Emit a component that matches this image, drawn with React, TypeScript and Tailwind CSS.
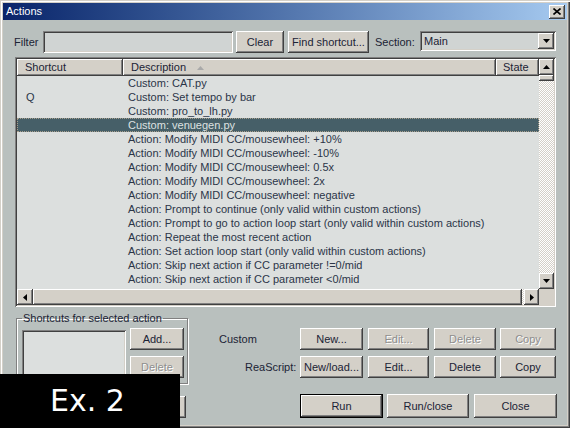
import React from "react";

const raised =
  "shadow-[inset_-1px_-1px_0_#404040,inset_1px_1px_0_#ffffff,inset_-2px_-2px_0_#808080]";
const sunken =
  "shadow-[inset_1px_1px_0_#808080,inset_-1px_-1px_0_#ffffff,inset_2px_2px_0_#404040,inset_-2px_-2px_0_#d4d0c8]";

function Btn({
  label,
  cls,
  disabled,
}: {
  label: string;
  cls: string;
  disabled?: boolean;
}) {
  return (
    <div
      className={`flex items-center justify-center bg-[#d4d0c8] whitespace-nowrap ${raised} ${cls} ${
        disabled
          ? "text-[#8e8e8e] [text-shadow:1px_1px_0_#ffffff]"
          : "text-[#1b2335]"
      }`}
    >
      {label}
    </div>
  );
}

function Tri({ dir, color = "#000000" }: { dir: "up" | "down" | "left" | "right"; color?: string }) {
  if (dir === "up")
    return (
      <svg width="7" height="4" viewBox="0 0 7 4">
        <polygon points="0,4 3.5,0 7,4" fill={color} />
      </svg>
    );
  if (dir === "down")
    return (
      <svg width="7" height="4" viewBox="0 0 7 4">
        <polygon points="0,0 7,0 3.5,4" fill={color} />
      </svg>
    );
  if (dir === "left")
    return (
      <svg width="4" height="7" viewBox="0 0 4 7">
        <polygon points="4,0 4,7 0,3.5" fill={color} />
      </svg>
    );
  return (
    <svg width="4" height="7" viewBox="0 0 4 7">
      <polygon points="0,0 4,3.5 0,7" fill={color} />
    </svg>
  );
}

const rows: [string, string][] = [
  ["", "Custom: CAT.py"],
  ["Q", "Custom: Set tempo by bar"],
  ["", "Custom: pro_to_lh.py"],
  ["", "Custom: venuegen.py"],
  ["", "Action: Modify MIDI CC/mousewheel: +10%"],
  ["", "Action: Modify MIDI CC/mousewheel: -10%"],
  ["", "Action: Modify MIDI CC/mousewheel: 0.5x"],
  ["", "Action: Modify MIDI CC/mousewheel: 2x"],
  ["", "Action: Modify MIDI CC/mousewheel: negative"],
  ["", "Action: Prompt to continue (only valid within custom actions)"],
  ["", "Action: Prompt to go to action loop start (only valid within custom actions)"],
  ["", "Action: Repeat the most recent action"],
  ["", "Action: Set action loop start (only valid within custom actions)"],
  ["", "Action: Skip next action if CC parameter !=0/mid"],
  ["", "Action: Skip next action if CC parameter <0/mid"],
  ["", "Action: Skip next action if CC parameter >0/mid"],
];

export default function App() {
  return (
    <div className="relative w-[570px] h-[428px] overflow-hidden bg-[#d4d0c8] p-[3px] flex flex-col font-['Liberation_Sans',Arial,sans-serif] text-[11px] shadow-[inset_1px_1px_0_#d4d0c8,inset_2px_2px_0_#ffffff,inset_-1px_-1px_0_#404040,inset_-2px_-2px_0_#808080]">
      {/* Title bar */}
      <div className="h-[17px] flex items-center pl-[3px] pr-[2px] bg-gradient-to-r from-[#0a246a] to-[#a6caf0]">
        <span className="flex-1 text-white leading-none">Actions</span>
        <div className={`w-[16px] h-[14px] bg-[#d4d0c8] flex items-center justify-center ${raised}`}>
          <svg width="8" height="7" viewBox="0 0 8 7">
            <path d="M0.5 0.5 L7.5 6.5 M7.5 0.5 L0.5 6.5" stroke="#000000" strokeWidth="1.6" />
          </svg>
        </div>
      </div>

      {/* Body */}
      <div className="flex-1 bg-[#b9c0be] flex flex-col text-[#1b2335]">
        {/* Filter row */}
        <div className="mt-[11px] ml-[11px] flex items-start h-[22px]">
          <div className="w-[29px] h-[22px] overflow-hidden whitespace-nowrap flex items-center">Filter</div>
          <div className={`w-[190px] h-[22px] bg-[#d0d4d3] ${sunken}`} />
          <Btn label="Clear" cls="ml-[3px] w-[48px] h-[22px]" />
          <Btn label="Find shortcut..." cls="ml-[4px] w-[81px] h-[22px]" />
          <div className="ml-[6px] w-[45px] h-[22px] flex items-center">Section:</div>
          <div className={`w-[136px] h-[20px] bg-[#d0d4d3] flex items-center pl-[4px] pr-[2px] ${sunken}`}>
            <span className="flex-1">Main</span>
            <div className={`w-[16px] h-[16px] bg-[#d4d0c8] flex items-center justify-center ${raised}`}>
              <Tri dir="down" />
            </div>
          </div>
        </div>

        {/* List */}
        <div className={`mt-[4px] ml-[12px] w-[541px] h-[250px] p-[2px] bg-[#dcdfde] flex ${sunken}`}>
          <div className="w-[522px] flex flex-col">
            <div className="h-[17px] flex bg-[#d4d0c8] text-[#1b2335]">
              <div className={`w-[106px] flex items-center pl-[8px] ${raised}`}>Shortcut</div>
              <div className={`w-[373px] flex items-center pl-[8px] ${raised}`}>
                <span>Description</span>
                <span className="ml-[11px] flex">
                  <Tri dir="up" color="#a9a9a9" />
                </span>
              </div>
              <div className={`w-[43px] flex items-center pl-[7px] ${raised}`}>State</div>
            </div>
            <div className="flex-1 overflow-hidden text-[#2b3548]">
              {rows.map(([k, d], i) => {
                const sel = i === 3;
                return (
                  <div
                    key={i}
                    className={`h-[14px] flex items-center whitespace-nowrap leading-[14px] ${
                      sel
                        ? "bg-[#465f68] text-[#dde1e1] outline outline-1 outline-dotted outline-[#a89e8c] -outline-offset-1"
                        : ""
                    }`}
                  >
                    <div className="w-[106px] pl-[9px]">{k}</div>
                    <div className="pl-[5px]">{d}</div>
                  </div>
                );
              })}
            </div>
            <div className="h-[16px] flex bg-[#d4d0c8]">
              <div className={`w-[16px] flex items-center justify-center ${raised}`}>
                <Tri dir="left" />
              </div>
              <div className={`flex-1 ${raised}`} />
              <div className="w-[2px] bg-[repeating-conic-gradient(#d4d0c8_0%_25%,#ffffff_0%_50%)] bg-[length:2px_2px]" />
              <div className={`w-[15px] flex items-center justify-center ${raised}`}>
                <Tri dir="right" />
              </div>
            </div>
          </div>
          <div className="w-[15px] flex flex-col">
            <div className={`h-[16px] bg-[#d4d0c8] flex items-center justify-center ${raised}`}>
              <Tri dir="up" />
            </div>
            <div className={`h-[6px] bg-[#d4d0c8] ${raised}`} />
            <div className="flex-1 bg-[repeating-conic-gradient(#d4d0c8_0%_25%,#ffffff_0%_50%)] bg-[length:2px_2px]" />
            <div className={`h-[16px] bg-[#d4d0c8] flex items-center justify-center ${raised}`}>
              <Tri dir="down" />
            </div>
            <div className="h-[16px] bg-[#d4d0c8]" />
          </div>
        </div>

        {/* Bottom area */}
        <div className="mt-[5px] ml-[13px] flex items-start">
          <div className="w-[172px] flex flex-col">
            <fieldset className="h-[72px] border border-[#808080] shadow-[1px_1px_0_#ffffff,inset_1px_1px_0_#ffffff]">
              <legend className="ml-[5px] px-[1px] leading-[13px] text-[#1b2335]">Shortcuts for selected action</legend>
              <div className="flex pl-[5px] pt-[3px]">
                <div className={`mt-[2px] w-[104px] h-[54px] bg-[#dcdfde] ${sunken}`} />
                <div className="ml-[4px] flex flex-col gap-[6px]">
                  <Btn label="Add..." cls="w-[54px] h-[22px]" />
                  <Btn label="Delete" cls="w-[54px] h-[22px]" disabled />
                </div>
              </div>
            </fieldset>
            <Btn label="Import/export..." cls="mt-[12px] ml-[6px] w-[164px] h-[22px]" />
          </div>
          <div className="flex flex-col">
            <div className="mt-[16px] flex items-center h-[22px]">
              <div className="w-[112px] pl-[31px]">Custom</div>
              <Btn label="New..." cls="w-[63px] h-[22px]" />
              <Btn label="Edit..." cls="ml-[5px] w-[61px] h-[22px]" disabled />
              <Btn label="Delete" cls="ml-[5px] w-[62px] h-[22px]" disabled />
              <Btn label="Copy" cls="ml-[4px] w-[56px] h-[22px]" disabled />
            </div>
            <div className="mt-[6px] flex items-center h-[22px]">
              <div className="w-[112px] pl-[57px]">ReaScript:</div>
              <Btn label="New/load..." cls="w-[63px] h-[22px]" />
              <Btn label="Edit..." cls="ml-[5px] w-[61px] h-[22px]" />
              <Btn label="Delete" cls="ml-[5px] w-[62px] h-[22px]" />
              <Btn label="Copy" cls="ml-[4px] w-[56px] h-[22px]" />
            </div>
            <div className="mt-[16px] flex items-center h-[24px] pl-[112px]">
              <div className="w-[83px] h-[24px] flex items-center justify-center bg-[#d4d0c8] text-[#1b2335] shadow-[inset_0_0_0_1px_#000000,inset_-2px_-2px_0_#404040,inset_2px_2px_0_#ffffff,inset_-3px_-3px_0_#808080]">
                Run
              </div>
              <Btn label="Run/close" cls="ml-[4px] w-[82px] h-[24px]" />
              <Btn label="Close" cls="ml-[5px] w-[83px] h-[24px]" />
            </div>
          </div>
        </div>
      </div>

      {/* Overlay label */}
      <div className="absolute left-0 top-[374px] w-[180px] h-[54px] bg-black flex items-center pl-[50px] text-white text-[30px] leading-none font-['DejaVu_Sans',sans-serif]">
        Ex. 2
      </div>
    </div>
  );
}
